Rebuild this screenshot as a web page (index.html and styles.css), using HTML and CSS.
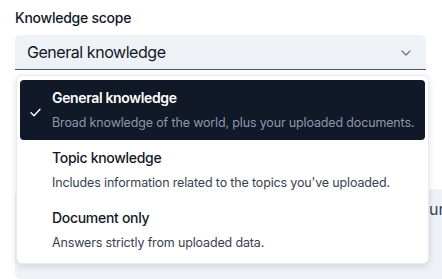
FILE: index.html
```html
<!DOCTYPE html>
<html lang="en">
<head>
    <meta charset="UTF-8">
    <meta name="viewport" content="width=device-width, initial-scale=1.0">
    <title>Knowledge scope</title>
    <link rel="stylesheet" href="styles.css">
</head>
<body>
    <div class="container">
        <div class="label">Knowledge scope</div>
        <div class="select-wrap">
            <div class="select">
                <span>General knowledge</span>
                <svg class="chevron" width="10" height="6" viewBox="0 0 10 6">
                    <path d="M1 1l4 4 4-4" fill="none" stroke="#6b7280" stroke-width="1.2" stroke-linecap="round" stroke-linejoin="round"/>
                </svg>
            </div>
            <div class="menu">
                <div class="option selected">
                    <div class="check">
                        <svg width="11" height="9" viewBox="0 0 11 9">
                            <path d="M1 4.8l3 3L10 1.2" fill="none" stroke="#fff" stroke-width="1.4" stroke-linecap="round" stroke-linejoin="round"/>
                        </svg>
                    </div>
                    <div class="option-text">
                        <div class="option-title">General knowledge</div>
                        <div class="option-desc">Broad knowledge of the world, plus your uploaded documents.</div>
                    </div>
                </div>
                <div class="option">
                    <div class="check"></div>
                    <div class="option-text">
                        <div class="option-title">Topic knowledge</div>
                        <div class="option-desc">Includes information related to the topics you've uploaded.</div>
                    </div>
                </div>
                <div class="option">
                    <div class="check"></div>
                    <div class="option-text">
                        <div class="option-title">Document only</div>
                        <div class="option-desc">Answers strictly from uploaded data.</div>
                    </div>
                </div>
            </div>
        </div>
        <div class="panel">Run</div>
    </div>
</body>
</html>
```

FILE: styles.css
```css
body {
    font-family: Inter, "Noto Sans", sans-serif;
    margin: 0;
    padding: 0;
    background-color: #fff;
    overflow: hidden;
    height: 279px;
}

.container {
    padding: 8px 16px 0 15px;
}

.label {
    font-size: 14px;
    line-height: 20px;
    font-weight: 500;
    letter-spacing: -0.25px;
    color: #111827;
    margin-bottom: 7px;
}

.select-wrap {
    position: relative;
}

.select {
    display: flex;
    align-items: center;
    justify-content: space-between;
    height: 34px;
    padding: 0 15px 0 12px;
    background-color: #eef1f6;
    border-bottom: 1px solid #4b5673;
    border-radius: 5px 5px 0 0;
    font-size: 16px;
    letter-spacing: -0.45px;
    color: #111827;
}

.chevron {
    margin-top: 1px;
}

.menu {
    position: absolute;
    top: 40px;
    left: 1px;
    right: -3px;
    z-index: 2;
    background-color: #fff;
    border: 1px solid #e6e9ef;
    border-radius: 6px;
    padding: 4px 3px 3px 3px;
    box-shadow: 0 2px 7px rgba(15, 23, 42, 0.13);
}

.option {
    display: flex;
    height: 60px;
    border-radius: 4px;
    color: #111827;
}

.option.selected {
    background-color: #111827;
    color: #fff;
}

.check {
    width: 32px;
    flex-shrink: 0;
    display: flex;
    align-items: center;
    padding-left: 10px;
    padding-top: 4px;
    box-sizing: border-box;
}

.option-text {
    padding-top: 8px;
}

.option-title {
    font-size: 14px;
    line-height: 20px;
    font-weight: 500;
    letter-spacing: -0.3px;
}

.selected .option-title {
    font-weight: 600;
    letter-spacing: -0.35px;
}

.option-desc {
    font-size: 12.5px;
    line-height: 18px;
    letter-spacing: -0.15px;
    margin-top: 6px;
    color: #374151;
}

.selected .option-desc {
    color: #8c97ad;
}

.panel {
    margin-top: 119px;
    margin-right: -36px;
    height: 82px;
    background-color: #eef1f6;
    border-radius: 6px;
    padding: 8px 14px 0 0;
    text-align: right;
    font-size: 16px;
    line-height: 24px;
    color: #374151;
}
```
